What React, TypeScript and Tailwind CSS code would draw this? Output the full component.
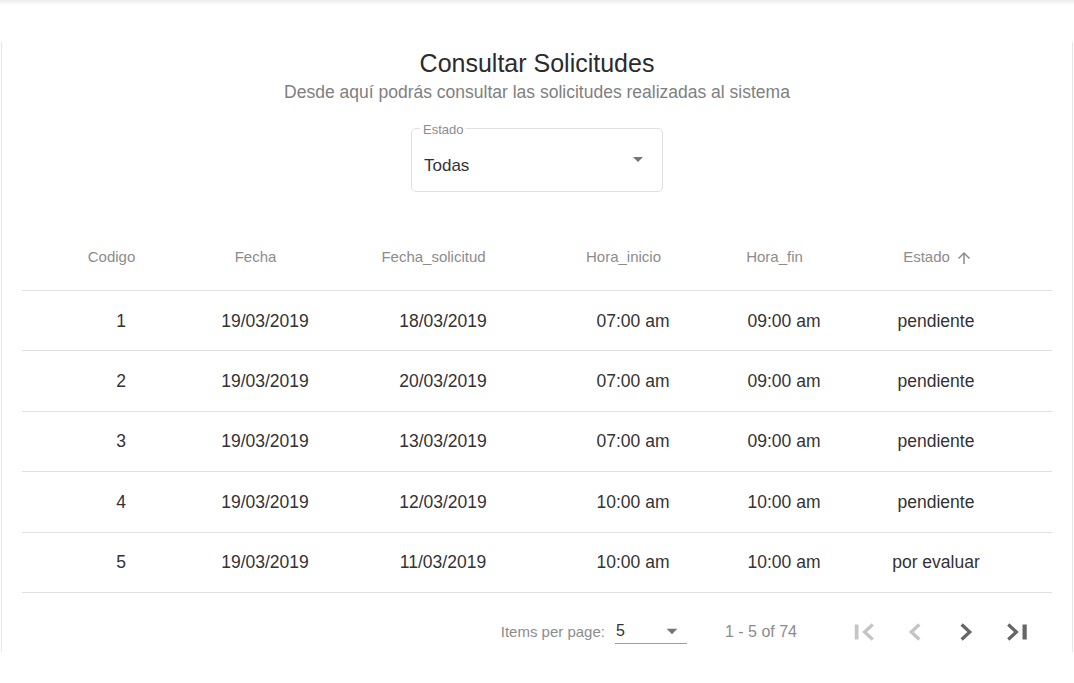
import type { ReactNode } from "react";

const rows = [
  ["1", "19/03/2019", "18/03/2019", "07:00 am", "09:00 am", "pendiente"],
  ["2", "19/03/2019", "20/03/2019", "07:00 am", "09:00 am", "pendiente"],
  ["3", "19/03/2019", "13/03/2019", "07:00 am", "09:00 am", "pendiente"],
  ["4", "19/03/2019", "12/03/2019", "10:00 am", "10:00 am", "pendiente"],
  ["5", "19/03/2019", "11/03/2019", "10:00 am", "10:00 am", "por evaluar"],
];

const headers = ["Codigo", "Fecha", "Fecha_solicitud", "Hora_inicio", "Hora_fin", "Estado"];

const cols = "grid grid-cols-[150px_138px_218px_162px_140px_164px]";

function Icon({ d, className }: { d: string; className?: string }) {
  return (
    <svg viewBox="0 0 24 24" className={className} fill="currentColor" aria-hidden>
      <path d={d} />
    </svg>
  );
}

const paths = {
  drop: "M7 10l5 5 5-5z",
  up: "M4 12l1.41 1.41L11 7.83V20h2V7.83l5.58 5.59L20 12l-8-8-8 8z",
};

// stroked glyphs for the paginator, a little heavier than the stock ones
const pager = {
  first: { line: "M19 6l-6.5 6 6.5 6", bar: "M4.6 6h3v12h-3z" },
  prev: { line: "M15.5 6L9 12l6.5 6" },
  next: { line: "M8.5 6L15 12l-6.5 6" },
  last: { line: "M5 6l6.5 6L5 18", bar: "M16.4 6h3.4v12h-3.4z" },
};

function PageButton({ icon, disabled }: { icon: { line: string; bar?: string }; disabled?: boolean }) {
  return (
    <button
      type="button"
      disabled={disabled}
      className={
        "flex h-[50px] w-[50px] items-center justify-center " +
        (disabled ? "text-[#c4c4c4]" : "text-[#666666]")
      }
    >
      <svg viewBox="0 0 24 24" className="h-[30px] w-[30px]" aria-hidden>
        <path d={icon.line} fill="none" stroke="currentColor" strokeWidth="2.6" />
        {icon.bar && <path d={icon.bar} fill="currentColor" />}
      </svg>
    </button>
  );
}

function HeaderCell({ children, sorted }: { children: ReactNode; sorted?: boolean }) {
  return (
    <div className="flex items-center justify-center text-[15px] text-[#8c8c8c]">
      <span>{children}</span>
      <Icon
        d={paths.up}
        className={"ml-[5px] h-[18px] w-[18px] " + (sorted ? "text-[#8c8c8c]" : "invisible")}
      />
    </div>
  );
}

export default function App() {
  return (
    <div className="min-h-screen bg-white font-['Liberation_Sans',Arial,sans-serif]">
      <div className="h-[5px] bg-gradient-to-b from-[#ebebeb] to-white" />
      <div className="px-[1px] pt-[37px]">
        <div className="h-[610px] border-x border-[#e6e6e6]">
          <div className="flex flex-col items-center pt-[6px]">
            <h1 className="text-[25px] leading-[30px] text-[#2b2b2b]">Consultar Solicitudes</h1>
            <p className="mt-[4px] text-[17.5px] leading-[20px] text-[#808080]">
              Desde aquí podrás consultar las solicitudes realizadas al sistema
            </p>
            <div className="relative mt-[26px] h-[64px] w-[252px] rounded-[5px] border border-[#e0e0e0]">
              <span className="absolute -top-[6px] left-[8px] bg-white px-[3px] text-[13px] leading-[13px] text-[#8c8c8c]">
                Estado
              </span>
              <div className="flex h-full items-center pl-[12px] pr-[12px] pt-[12px]">
                <span className="flex-1 text-[17px] text-[#333333]">Todas</span>
                <Icon d={paths.drop} className="-mt-[14px] h-[24px] w-[24px] text-[#757575]" />
              </div>
            </div>
          </div>

          <div className="mx-[20px] mt-[33px]">
            <div className={cols + " h-[66px] items-center border-b border-[#e0e0e0] pl-[26px]"}>
              {headers.map((h) => (
                <HeaderCell key={h} sorted={h === "Estado"}>
                  {h}
                </HeaderCell>
              ))}
            </div>
            {rows.map((r) => (
              <div
                key={r[0]}
                className={cols + " h-[60.4px] items-center border-b border-[#e0e0e0] pl-[24px] text-[17.5px] text-[#333333]"}
              >
                {r.map((c, i) => (
                  <div key={i} className="text-center">
                    {c}
                  </div>
                ))}
              </div>
            ))}

            <div className="flex h-[78px] items-center justify-end pr-[10px] text-[15px] text-[#8c8c8c]">
              <span>Items per page:</span>
              <div className="ml-[10px] flex h-[24px] w-[72px] items-center border-b border-[#9e9e9e]">
                <span className="flex-1 pl-[1px] text-[16px] text-[#333333]">5</span>
                <Icon d={paths.drop} className="mr-[2px] h-[26px] w-[26px] text-[#757575]" />
              </div>
              <span className="ml-[38px] mr-[42px] text-[16px]">1 - 5 of 74</span>
              <div className="flex gap-[1px]">
                <PageButton icon={pager.first} disabled />
                <PageButton icon={pager.prev} disabled />
                <PageButton icon={pager.next} />
                <PageButton icon={pager.last} />
              </div>
            </div>
          </div>
        </div>
      </div>
    </div>
  );
}
